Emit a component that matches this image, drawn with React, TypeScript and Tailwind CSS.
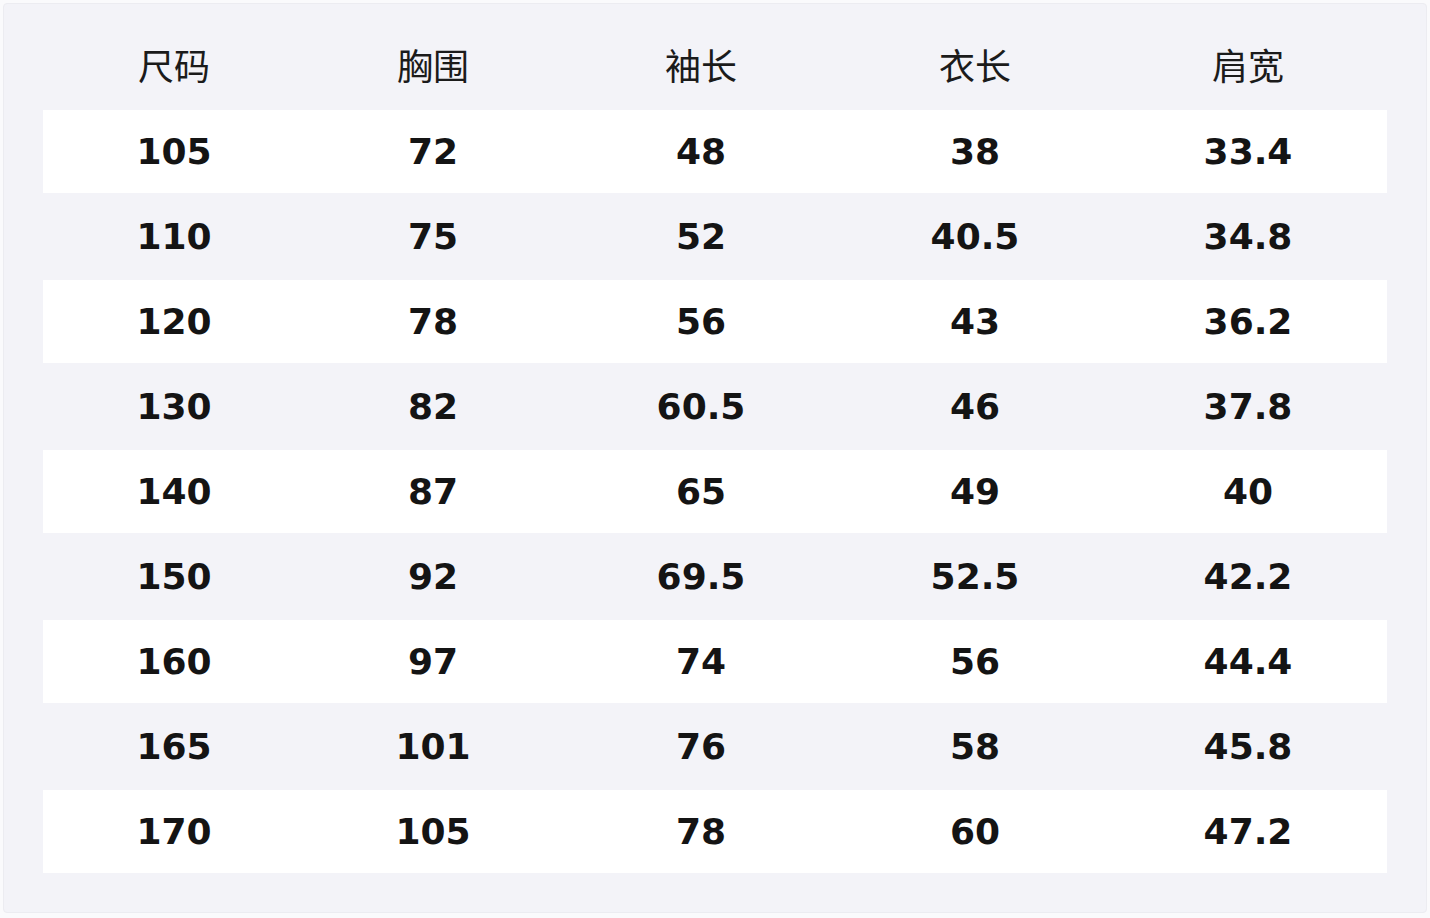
import React from "react";

const headers = ["尺码", "胸围", "袖长", "衣长", "肩宽"];
const rows = [
  ["105", "72", "48", "38", "33.4"],
  ["110", "75", "52", "40.5", "34.8"],
  ["120", "78", "56", "43", "36.2"],
  ["130", "82", "60.5", "46", "37.8"],
  ["140", "87", "65", "49", "40"],
  ["150", "92", "69.5", "52.5", "42.2"],
  ["160", "97", "74", "56", "44.4"],
  ["165", "101", "76", "58", "45.8"],
  ["170", "105", "78", "60", "47.2"],
];
const widths = ["w-[262px]", "w-[256px]", "w-[280px]", "w-[268px]", "w-[278px]"];

export default function App() {
  return (
    <div className="w-[1430px] h-[918px] bg-[#fafafc] p-[3px]">
      <div className="w-[1424px] h-[910px] bg-[#f3f3f8] rounded-[4px] border border-[#ececf1] px-[39px]">
        <div className="flex h-[106px] pt-[14px] items-center">
          {headers.map((h, i) => (
            <div
              key={h}
              className={`${widths[i]} text-center text-[36px] text-[#1b1b1b] font-normal`}
              style={{ fontFamily: '"Noto Sans CJK SC", "Noto Sans", sans-serif' }}
            >
              {h}
            </div>
          ))}
        </div>
        {rows.map((r, ri) => (
          <div
            key={ri}
            className={`flex items-center ${ri % 2 === 0 ? "bg-white h-[83px]" : "bg-[#f3f3f8] h-[87px]"}`}
          >
            {r.map((c, ci) => (
              <div
                key={ci}
                className={`${widths[ci]} text-center text-[36px] font-bold text-[#141414]`}
                style={{ fontFamily: '"DejaVu Sans", sans-serif' }}
              >
                {c}
              </div>
            ))}
          </div>
        ))}
      </div>
    </div>
  );
}
